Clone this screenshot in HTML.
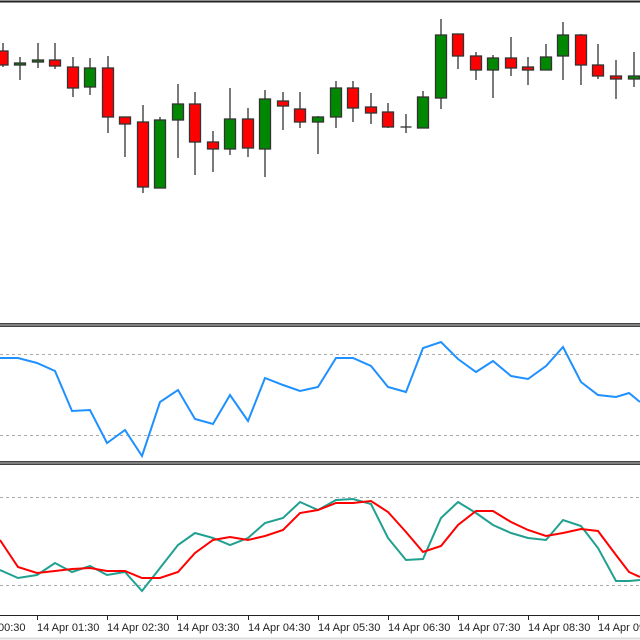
<!DOCTYPE html><html><head><style>body{margin:0;background:#fff}svg{display:block}</style></head><body>
<svg width="640" height="640" xmlns="http://www.w3.org/2000/svg" font-family="Liberation Sans, sans-serif">
<rect width="640" height="640" fill="#fff"/>
<line x1="0" y1="1.5" x2="640" y2="1.5" stroke="#222" stroke-width="2"/>
<g stroke="#333" stroke-width="1.3" stroke-linejoin="miter">
<g id="c"></g>
<line x1="3" y1="43" x2="3" y2="67"/><rect x="-3" y="51" width="11" height="14" fill="#f00"/>
<line x1="20" y1="57" x2="20" y2="80"/><rect x="14.5" y="63" width="11" height="2" fill="#080"/>
<line x1="38" y1="43" x2="38" y2="68"/><rect x="32.5" y="60" width="11" height="2" fill="#080"/>
<line x1="55" y1="43" x2="55" y2="69"/><rect x="49.5" y="60" width="11" height="6" fill="#f00"/>
<line x1="73" y1="57" x2="73" y2="97"/><rect x="67.5" y="67" width="11" height="21" fill="#f00"/>
<line x1="90" y1="58" x2="90" y2="95"/><rect x="84.5" y="68" width="11" height="19" fill="#080"/>
<line x1="108" y1="56" x2="108" y2="133"/><rect x="102.5" y="68" width="11" height="49" fill="#f00"/>
<line x1="125" y1="117" x2="125" y2="157"/><rect x="119.5" y="117" width="11" height="7" fill="#f00"/>
<line x1="143" y1="105" x2="143" y2="193"/><rect x="137.5" y="122" width="11" height="65" fill="#f00"/>
<line x1="160" y1="117" x2="160" y2="188"/><rect x="154.5" y="120" width="11" height="68" fill="#080"/>
<line x1="178" y1="84" x2="178" y2="158"/><rect x="172.5" y="104" width="11" height="16" fill="#080"/>
<line x1="195" y1="92" x2="195" y2="175"/><rect x="189.5" y="104" width="11" height="38" fill="#f00"/>
<line x1="213" y1="131" x2="213" y2="172"/><rect x="207.5" y="142" width="11" height="7" fill="#f00"/>
<line x1="230" y1="88" x2="230" y2="155"/><rect x="224.5" y="119" width="11" height="30" fill="#080"/>
<line x1="248" y1="108" x2="248" y2="157"/><rect x="242.5" y="119" width="11" height="29" fill="#f00"/>
<line x1="265" y1="90" x2="265" y2="177"/><rect x="259.5" y="99" width="11" height="50" fill="#080"/>
<line x1="283" y1="92" x2="283" y2="130"/><rect x="277.5" y="101" width="11" height="5" fill="#f00"/>
<line x1="300" y1="92" x2="300" y2="128"/><rect x="294.5" y="109" width="11" height="13" fill="#f00"/>
<line x1="318" y1="116" x2="318" y2="154"/><rect x="312.5" y="117" width="11" height="5" fill="#080"/>
<line x1="336" y1="81" x2="336" y2="128"/><rect x="330.5" y="88" width="11" height="29" fill="#080"/>
<line x1="353" y1="81" x2="353" y2="122"/><rect x="347.5" y="88" width="11" height="20" fill="#f00"/>
<line x1="371" y1="93" x2="371" y2="124"/><rect x="365.5" y="107" width="11" height="6" fill="#f00"/>
<line x1="388" y1="103" x2="388" y2="128"/><rect x="382.5" y="112" width="11" height="15" fill="#f00"/>
<line x1="406" y1="114" x2="406" y2="133"/><line x1="400.5" y1="127" x2="411.5" y2="127"/>
<line x1="423" y1="91" x2="423" y2="128"/><rect x="417.5" y="97" width="11" height="31" fill="#080"/>
<line x1="441" y1="19" x2="441" y2="109"/><rect x="435.5" y="35" width="11" height="63" fill="#080"/>
<line x1="458" y1="34" x2="458" y2="69"/><rect x="452.5" y="34" width="11" height="22" fill="#f00"/>
<line x1="476" y1="52" x2="476" y2="80"/><rect x="470.5" y="56" width="11" height="14" fill="#f00"/>
<line x1="493" y1="55" x2="493" y2="98"/><rect x="487.5" y="58" width="11" height="12" fill="#080"/>
<line x1="511" y1="37" x2="511" y2="76"/><rect x="505.5" y="58" width="11" height="10" fill="#f00"/>
<line x1="528" y1="57" x2="528" y2="85"/><rect x="522.5" y="67" width="11" height="3" fill="#f00"/>
<line x1="546" y1="44" x2="546" y2="70"/><rect x="540.5" y="57" width="11" height="13" fill="#080"/>
<line x1="563" y1="22" x2="563" y2="80"/><rect x="557.5" y="35" width="11" height="21" fill="#080"/>
<line x1="581" y1="34" x2="581" y2="85"/><rect x="575.5" y="35" width="11" height="30" fill="#f00"/>
<line x1="598" y1="44" x2="598" y2="79"/><rect x="592.5" y="65" width="11" height="11" fill="#f00"/>
<line x1="616" y1="60" x2="616" y2="99"/><rect x="610.5" y="76" width="11" height="3" fill="#f00"/>
<line x1="634" y1="52" x2="634" y2="87"/><rect x="628.5" y="76" width="11" height="3" fill="#080"/>
</g>
<rect x="0" y="323" width="640" height="4" fill="#444"/><line x1="0" y1="325" x2="640" y2="325" stroke="#bbb" stroke-width="1"/>
<rect x="0" y="461" width="640" height="4" fill="#444"/><line x1="0" y1="463" x2="640" y2="463" stroke="#bbb" stroke-width="1"/>
<g stroke="#aaa" stroke-dasharray="3,3" stroke-width="1">
<line x1="0" y1="354.5" x2="640" y2="354.5"/><line x1="0" y1="435.5" x2="640" y2="435.5"/>
<line x1="0" y1="497.5" x2="640" y2="497.5"/><line x1="0" y1="585.5" x2="640" y2="585.5"/>
</g>
<polyline fill="none" stroke="#1e90ff" stroke-width="2" points="0,358 18,358 37,363 55,371 72,411 90,410 107,443 125,430 142,456 160,402 178,390 195,419 213,424 230,395 248,421 265,378 283,385 300,391 318,387 336,358 353,358 371,366 388,387 406,392 423,348 441,342 458,359 476,372 493,361 511,376 528,379 546,366 563,347 581,382 598,395 616,397 629,393 640,402"/>
<polyline fill="none" stroke="#20a090" stroke-width="2" points="0,570 18,578 37,575 55,563 72,572 90,566 107,575 125,572 142,591 160,568 178,545 195,533 213,538 230,545 248,538 265,523 283,518 300,502 318,510 336,500 353,499 371,504 388,538 406,560 423,559 441,518 458,502 476,513 493,525 511,533 528,538 546,540 563,520 581,526 598,548 616,581 629,581 640,580"/>
<polyline fill="none" stroke="#f00" stroke-width="2" points="0,540 18,567 37,573 55,571 72,569 90,568 107,571 125,571 142,578 160,578 178,572 195,553 213,540 230,537 248,540 265,536 283,530 300,513 318,510 336,503 353,503 371,501 388,512 406,532 423,552 441,546 458,525 476,511 493,511 511,522 528,530 546,536 563,533 581,529 598,531 616,555 629,572 640,577"/>
<line x1="0" y1="615.5" x2="640" y2="615.5" stroke="#222"/>
<g stroke="#222"><line x1="37.5" y1="615" x2="37.5" y2="620"/><line x1="107.5" y1="615" x2="107.5" y2="620"/><line x1="177.5" y1="615" x2="177.5" y2="620"/><line x1="248.5" y1="615" x2="248.5" y2="620"/><line x1="318.5" y1="615" x2="318.5" y2="620"/><line x1="388.5" y1="615" x2="388.5" y2="620"/><line x1="458.5" y1="615" x2="458.5" y2="620"/><line x1="528.5" y1="615" x2="528.5" y2="620"/><line x1="598.5" y1="615" x2="598.5" y2="620"/></g>
<g font-size="11" fill="#222">
<text x="-2" y="631">00:30</text>
<text x="37" y="631">14 Apr 01:30</text><text x="107" y="631">14 Apr 02:30</text><text x="177" y="631">14 Apr 03:30</text><text x="248" y="631">14 Apr 04:30</text><text x="318" y="631">14 Apr 05:30</text><text x="388" y="631">14 Apr 06:30</text><text x="458" y="631">14 Apr 07:30</text><text x="528" y="631">14 Apr 08:30</text><text x="598" y="631">14 Apr 09:30</text>
</g>
<line x1="0" y1="638.5" x2="640" y2="638.5" stroke="#ddd" stroke-width="2"/>
</svg></body></html>
